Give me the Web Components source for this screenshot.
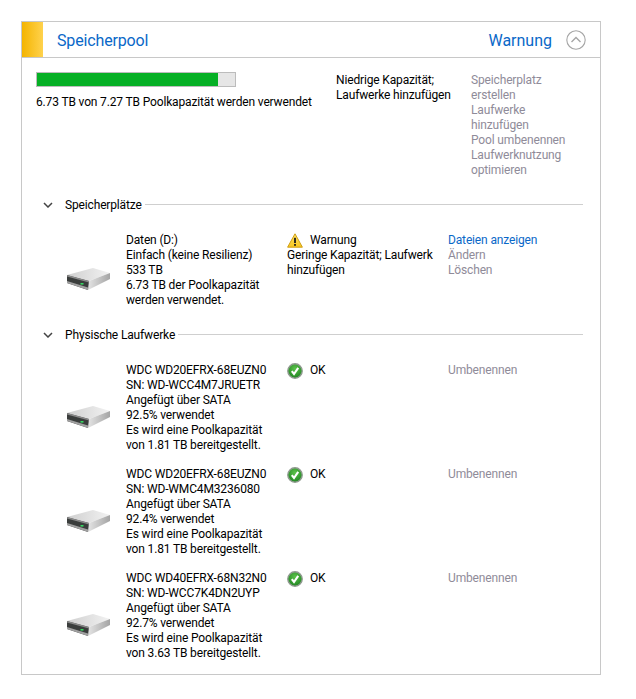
<!DOCTYPE html>
<html lang="de">
<head>
<meta charset="utf-8">
<title>Speicherpool</title>
<style>
  html, body { margin: 0; background: #fff; }
  body { font: 12px/15px Roboto, "Liberation Sans", sans-serif; color: #000; letter-spacing: -0.15px; }
</style>
</head>
<body>
<storage-panel>
  <span slot="title">Speicherpool</span>
  <span slot="state">Warnung</span>

  <pool-summary used="6.73 TB von 7.27 TB Poolkapazität werden verwendet" percent="91.5"></pool-summary>

  <drive-section label="Speicherplätze">
    <drive-row status="warn" statustext="Warnung" statusnote="Geringe Kapazität; Laufwerk hinzufügen"
      lines="Daten (D:)|Einfach (keine Resilienz)|533 TB|6.73 TB der Poolkapazität|werden verwendet."
      actions="*Dateien anzeigen|Ändern|Löschen"></drive-row>
  </drive-section>

  <drive-section label="Physische Laufwerke">
    <drive-row status="ok" statustext="OK"
      lines="WDC WD20EFRX-68EUZN0|SN: WD-WCC4M7JRUETR|Angefügt über SATA|92.5% verwendet|Es wird eine Poolkapazität|von 1.81 TB bereitgestellt."
      actions="Umbenennen"></drive-row>
    <drive-row status="ok" statustext="OK"
      lines="WDC WD20EFRX-68EUZN0|SN: WD-WMC4M3236080|Angefügt über SATA|92.4% verwendet|Es wird eine Poolkapazität|von 1.81 TB bereitgestellt."
      actions="Umbenennen"></drive-row>
    <drive-row status="ok" statustext="OK"
      lines="WDC WD40EFRX-68N32N0|SN: WD-WCC7K4DN2UYP|Angefügt über SATA|92.7% verwendet|Es wird eine Poolkapazität|von 3.63 TB bereitgestellt."
      actions="Umbenennen"></drive-row>
  </drive-section>
</storage-panel>

<script>
class StoragePanel extends HTMLElement {
  constructor() {
    super();
    const shadow = this.attachShadow({ mode: "open" });
    shadow.innerHTML = `
      <style>
        :host {
          display: block;
          box-sizing: border-box;
          width: 580px;
          height: 654px;
          margin: 21px 0 0 21px;
          border: 1px solid #c8c8c8;
        }
        header {
          display: flex;
          align-items: center;
          height: 35px;
          border-bottom: 1px solid #c8c8c8;
        }
        .stripe {
          width: 21px;
          align-self: stretch;
          background: linear-gradient(90deg, #f4b400, #ffd24d);
        }
        .title, .state {
          font-size: 16px;
          line-height: 20px;
          padding-top: 2px;
          color: #0a68c8;
          letter-spacing: 0;
        }
        .title { margin-left: 14px; flex: 1; letter-spacing: -0.15px; }
        .toggle { margin: 0 14px 0 14px; display: block; }
      </style>
      <header>
        <div class="stripe"></div>
        <div class="title"><slot name="title"></slot></div>
        <div class="state"><slot name="state"></slot></div>
        <svg class="toggle" width="20" height="20" viewBox="0 0 20 20" fill="none" stroke="#a6a6a6">
          <circle cx="10" cy="10" r="9.2" stroke-width="1.1"/>
          <path d="M5.5 12 L10 7.5 L14.5 12" stroke-width="1.4"/>
        </svg>
      </header>
      <slot></slot>
    `;
  }
}
customElements.define("storage-panel", StoragePanel);

class PoolSummary extends HTMLElement {
  constructor() {
    super();
    const shadow = this.attachShadow({ mode: "open" });
    const used = this.getAttribute("used");
    const percent = this.getAttribute("percent");
    shadow.innerHTML = `
      <style>
        :host {
          display: grid;
          grid-template-columns: 300px 135px 115px;
          padding: 14px 0 0 14px;
          height: 140px;
          box-sizing: border-box;
        }
        .bar {
          box-sizing: border-box;
          width: 200px;
          height: 15px;
          border: 1px solid #bcbcbc;
          background: #e6e6e6;
          margin-bottom: 8px;
        }
        .fill { height: 100%; width: ${percent}%; background: #06b025; }
        .muted { color: #8f8b99; }
        .note { padding-top: 1px; }
      </style>
      <div>
        <div class="bar"><div class="fill"></div></div>
        <div>${used}</div>
      </div>
      <div class="note">Niedrige Kapazität;<br>Laufwerke hinzufügen</div>
      <div class="note muted">Speicherplatz<br>erstellen<br>Laufwerke<br>hinzufügen<br>Pool umbenennen<br>Laufwerknutzung<br>optimieren</div>
    `;
  }
}
customElements.define("pool-summary", PoolSummary);

class DriveSection extends HTMLElement {
  constructor() {
    super();
    const shadow = this.attachShadow({ mode: "open" });
    shadow.innerHTML = `
      <style>
        :host { display: block; padding: 0 17px 0 20px; }
        .head {
          display: flex;
          align-items: center;
          height: 15px;
          margin-bottom: 20px;
        }
        svg { display: block; margin: -1px 12px 0 1px; }
        .rule { flex: 1; height: 1px; background: #cfcfcf; margin: 0 0 2px 3px; }
        .rows { display: flex; flex-direction: column; gap: 14px; margin-bottom: 20px; }
      </style>
      <div class="head">
        <svg width="10" height="6" viewBox="0 0 10 6" fill="none" stroke="#444" stroke-width="1.5">
          <path d="M1 1 L5 5 L9 1"/>
        </svg>
        <span>${this.getAttribute("label")}</span>
        <div class="rule"></div>
      </div>
      <div class="rows"><slot></slot></div>
    `;
  }
}
customElements.define("drive-section", DriveSection);

let iconCount = 0;
function hddIcon() {
  const id = "hdd" + iconCount++;
  return `
  <svg width="44" height="23" viewBox="0 0 44 23">
    <defs>
      <linearGradient id="${id}t" x1="0" y1="0" x2="1" y2="0">
        <stop offset="0" stop-color="#cfcfcf"/><stop offset="1" stop-color="#f2f2f2"/>
      </linearGradient>
      <linearGradient id="${id}s" x1="0" y1="0" x2="1" y2="0">
        <stop offset="0" stop-color="#e4e4e4"/><stop offset="1" stop-color="#a4a4a4"/>
      </linearGradient>
    </defs>
    <path d="M0 7 L26 0 L43 5 L22 13 Z" fill="url(#${id}t)"/>
    <path d="M22 13 L43 5 L43 11 L21 22 Z" fill="url(#${id}s)"/>
    <path d="M0 7 L22 13 L21 22 L0 15 Z" fill="#3a3d3c"/>
    <path d="M0 13 L21 19.5 L21 22 L0 15 Z" fill="#a0a0a0"/>
    <path d="M0 7 L22 13 L22 14.5 L0 8.5 Z" fill="#8a8a8a"/>
    <rect x="13.5" y="15" width="3" height="1.6" fill="#35d860"/>
  </svg>`;
}

function statusIcon(kind) {
  const id = "st" + iconCount++;
  if (kind === "warn") return `
    <svg width="16" height="15" viewBox="0 0 16 15">
      <defs><linearGradient id="${id}" x1="0" y1="0" x2="0" y2="1">
        <stop offset="0" stop-color="#fde36a"/><stop offset="1" stop-color="#f8c51c"/>
      </linearGradient></defs>
      <path d="M8 .8 L15.4 14.2 L.6 14.2 Z" fill="url(#${id})" stroke="#cf9f16" stroke-width="1" stroke-linejoin="round"/>
      <rect x="7.1" y="4.8" width="1.8" height="5.2" fill="#1a1a1a"/>
      <rect x="7.1" y="11" width="1.8" height="1.8" fill="#1a1a1a"/>
    </svg>`;
  return `
    <svg width="16" height="16" viewBox="0 0 16 16">
      <defs><radialGradient id="${id}" cx="0.5" cy="0.35" r="0.7">
        <stop offset="0" stop-color="#5cc24a"/><stop offset="1" stop-color="#1a7f1e"/>
      </radialGradient></defs>
      <circle cx="8" cy="8" r="7.2" fill="url(#${id})" stroke="#8f9a8f" stroke-width="1.4"/>
      <path d="M4.8 8.2 L7 11 L11.2 4.8" fill="none" stroke="#fff" stroke-width="2.1"/>
    </svg>`;
}

class DriveRow extends HTMLElement {
  constructor() {
    super();
    const shadow = this.attachShadow({ mode: "open" });
    const lines = this.getAttribute("lines").split("|");
    const actions = this.getAttribute("actions").split("|");
    const status = this.getAttribute("status");
    const note = this.getAttribute("statusnote");
    shadow.innerHTML = `
      <style>
        :host {
          display: grid;
          grid-template-columns: 84px 161px 161px 1fr;
        }
        .icon { align-self: center; padding-left: 25px; margin-top: 18px; }
        .icon svg { display: block; }
        .status { display: flex; align-items: center; gap: 7px; height: 15px; }
        .status svg { display: block; flex: none; }
        .note { width: 150px; }
        a { display: block; color: #8f8b99; text-decoration: none; }
        a.live { color: #0a68c8; }
      </style>
      <div class="icon">${hddIcon()}</div>
      <div>${lines.map(l => `<div>${l}</div>`).join("")}</div>
      <div>
        <div class="status">${statusIcon(status)}<span>${this.getAttribute("statustext")}</span></div>
        ${note ? `<div class="note">${note}</div>` : ""}
      </div>
      <div>${actions.map(a => a[0] === "*"
        ? `<a class="live">${a.slice(1)}</a>`
        : `<a>${a}</a>`).join("")}</div>
    `;
  }
}
customElements.define("drive-row", DriveRow);
</script>
</body>
</html>
